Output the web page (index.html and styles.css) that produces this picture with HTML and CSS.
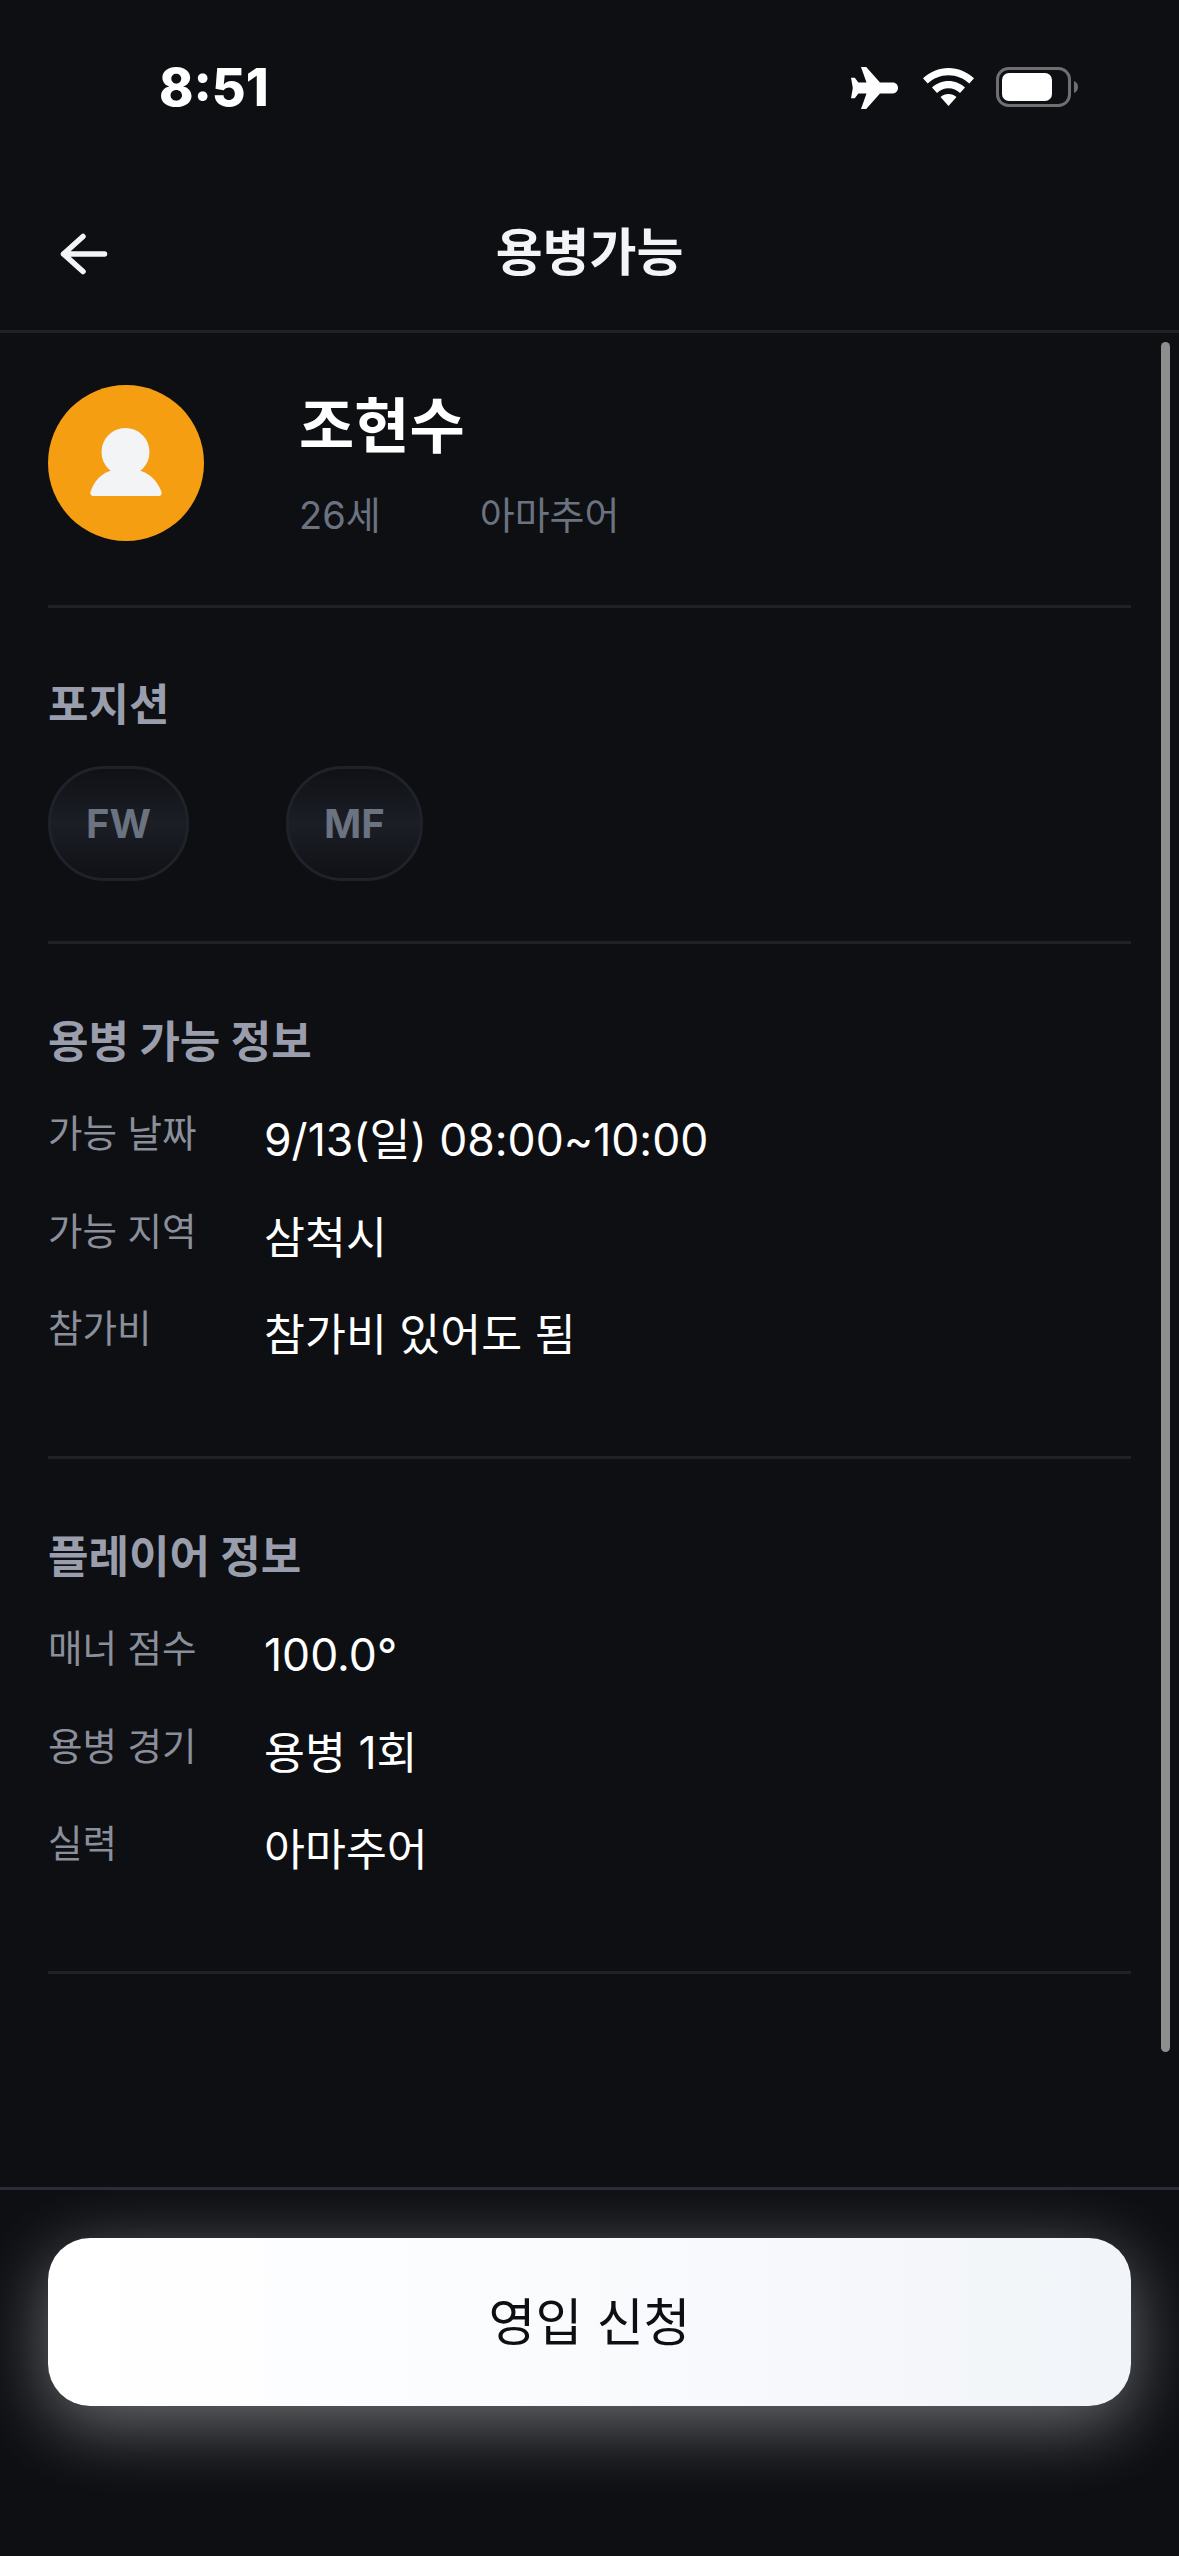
FILE: index.html
```html
<!DOCTYPE html>
<html lang="ko">
<head>
<meta charset="utf-8">
<title>용병가능</title>
<link rel="stylesheet" href="styles.css">
</head>
<body>
<div class="page">
  <div class="statusbar">
    <span class="time">8:51</span>
    <div class="status-icons">
      <svg class="ic-plane" viewBox="0 0 47 42"><path fill="#fff" d="M10 0h5.200L29 15.600h13c2.700 0 5 2.400 5 5.400s-2.300 5.400-5 5.400H29L15.200 42H10l5.500-15.600H7.400l-3.600 4.800H0l1.800-10.200L0 10.800h3.800l3.600 4.800h8.100z"/></svg>
      <svg class="ic-wifi" viewBox="0 0 51 38"><path fill="#fff" d="M25.500 0C35 0 44 3.800 51 10.200l-4.700 5.200C40.700 10.300 33.300 7.200 25.500 7.200S10.300 10.300 4.700 15.400L0 10.200C7 3.800 16 0 25.500 0zM25.500 13c6.200 0 12.100 2.400 16.500 6.500l-5 5.400c-3.100-2.900-7.200-4.600-11.500-4.600S17.100 22 14 24.900l-5-5.400C13.400 15.400 19.300 13 25.500 13zM25.500 26c3 0 5.800 1.100 8 3.100L25.500 38l-8-8.900c2.200-2 5-3.100 8-3.100z"/></svg>
      <svg class="ic-batt" viewBox="0 0 83 40"><rect x="1.500" y="1.500" width="72" height="37" rx="11" fill="none" stroke="#6f6f72" stroke-width="3"/><rect x="6" y="6" width="50" height="28" rx="7" fill="#fff"/><path fill="#6f6f72" d="M78 14c2.500 1 4 3.300 4 6s-1.500 5-4 6z"/></svg>
    </div>
  </div>

  <header class="header">
    <svg class="ic-back" viewBox="0 0 48 42"><path fill="none" stroke="#f3f4f6" stroke-width="5.500" stroke-linecap="round" stroke-linejoin="round" d="M23 3.500 3.500 21 23 38.500M3.500 21h41"/></svg>
    <h1 class="title">용병가능</h1>
  </header>

  <main class="content">
    <section class="profile">
      <div class="avatar">
        <svg class="ic-person" viewBox="0 0 72 68"><circle cx="35.500" cy="24" r="24" fill="#f3f4f6"/><path fill="#f3f4f6" d="M20 43c-9 3-16 10-19.500 21-.6 2 .5 4 2.500 4h66c2 0 3-2 2.500-4C67.500 53 60 46 51 43z"/></svg>
      </div>
      <div class="who">
        <div class="name">조현수</div>
        <div class="meta"><span>26세</span><span>아마추어</span></div>
      </div>
    </section>

    <section class="sec sec-pos">
      <h2 class="sec-title">포지션</h2>
      <div class="chips">
        <span class="chip">FW</span>
        <span class="chip">MF</span>
      </div>
    </section>

    <section class="sec sec-info">
      <h2 class="sec-title">용병 가능 정보</h2>
      <dl class="rows">
        <div class="row"><dt>가능 날짜</dt><dd>9/13(일) 08:00~10:00</dd></div>
        <div class="row"><dt>가능 지역</dt><dd>삼척시</dd></div>
        <div class="row"><dt>참가비</dt><dd>참가비 있어도 됨</dd></div>
      </dl>
    </section>

    <section class="sec sec-info">
      <h2 class="sec-title">플레이어 정보</h2>
      <dl class="rows">
        <div class="row"><dt>매너 점수</dt><dd>100.0°</dd></div>
        <div class="row"><dt>용병 경기</dt><dd>용병 1회</dd></div>
        <div class="row"><dt>실력</dt><dd>아마추어</dd></div>
      </dl>
    </section>
  </main>

  <div class="scrollbar"></div>

  <footer class="footer">
    <button class="cta">영입 신청</button>
  </footer>
</div>
</body>
</html>
```
FILE: styles.css
```css
* { box-sizing: border-box; margin: 0; padding: 0; }
html, body { width: 1179px; height: 2556px; background: #0d0f13; overflow: hidden; }
body { font-family: Inter, "Noto Sans CJK KR", "Noto Sans", sans-serif; color: #fff; }
.page { position: relative; width: 1179px; height: 2556px; display: flex; flex-direction: column; background: #0d0f13; }

.statusbar { height: 170px; flex: none; display: flex; justify-content: space-between; align-items: flex-start; padding: 60px 100px 0 159px; }
.time { font-size: 52px; line-height: 56px; font-weight: 800; letter-spacing: 0; }
.status-icons { display: flex; align-items: flex-start; padding-top: 7px; }
.ic-plane { width: 47px; height: 42px; margin-left: 0; }
.ic-wifi { width: 51px; height: 38px; margin-left: 25px; margin-top: 1px; }
.ic-batt { width: 83px; height: 40px; margin-left: 22px; }

.header { height: 163px; flex: none; display: flex; align-items: center; justify-content: center; position: relative; border-bottom: 3px solid #1f2126; }
.ic-back { position: absolute; left: 60px; top: 63px; width: 48px; height: 42px; }
.title { font-size: 51px; line-height: 60px; font-weight: 700; color: #f3f4f6; margin-top: 6px; }

.content { flex: 1; padding: 0 48px; min-height: 0; }
.profile { display: flex; align-items: flex-start; padding: 52px 0 65px; border-bottom: 3px solid #1f2126; height: 275px; }
.avatar { width: 156px; height: 156px; border-radius: 50%; background: #f59e11; display: flex; align-items: center; justify-content: center; flex: none; }
.ic-person { width: 72px; height: 68px; margin-top: -2px; }
.who { margin-left: 95px; }
.name { font-size: 60px; line-height: 76px; font-weight: 700; letter-spacing: 0; margin-top: 3px; }
.meta { display: flex; gap: 99px; font-size: 38px; line-height: 50px; color: #6b7280; margin-top: 26px; }

.sec { border-bottom: 3px solid #1f2126; }
.sec-pos { height: 336px; padding-top: 68px; }
.sec-info { height: 515px; padding-top: 69px; }
.sec-title { font-size: 44px; line-height: 58px; font-weight: 700; color: #9a9eac; }
.chips { display: flex; gap: 97px; margin-top: 32px; }
.chip { height: 115px; padding: 0 35px; border-radius: 57px; border: 3px solid #1f2228; background: linear-gradient(180deg, #0f1116 0%, #1b1e25 50%, #0f1116 100%); display: flex; align-items: center; justify-content: center; font-size: 40px; font-weight: 700; color: #6b7280; }

.rows { margin-top: 38px; }
.row { display: flex; height: 97.500px; align-items: flex-start; }
.row dt { width: 216px; flex: none; font-size: 37.500px; line-height: 50px; color: #8b8f9b; }
.row dd { font-size: 44.500px; line-height: 60px; color: #fff; margin-top: 1px; }

.scrollbar { position: absolute; left: 1161px; top: 342px; width: 9px; height: 1710px; border-radius: 5px; background: #8e8e8e; }

.footer { height: 369px; flex: none; overflow: hidden; border-top: 3px solid #2a2d36; padding: 48px 48px 0; }
.cta { display: block; width: 100%; height: 168px; border: 0; border-radius: 42px; padding-bottom: 6px; background: linear-gradient(90deg, #ffffff 0%, #fbfcfe 40%, #f1f4f8 100%); box-shadow: 0 18px 72px rgba(255,255,255,.4); font-family: inherit; font-size: 51px; font-weight: 400; color: #0d0f13; }
```
